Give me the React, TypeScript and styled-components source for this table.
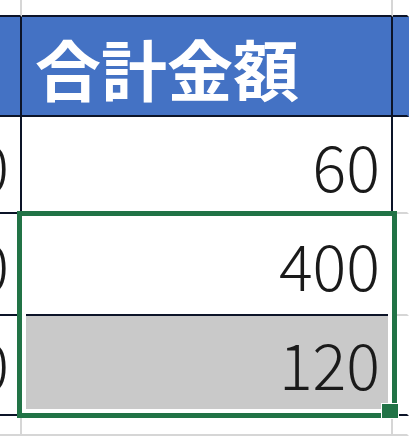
import React from "react";
import styled, { createGlobalStyle } from "styled-components";

const Global = createGlobalStyle`
  html, body { margin: 0; padding: 0; background: #ffffff; overflow: hidden; }
  body { font-family: "Noto Sans CJK JP", "Noto Sans", sans-serif; }
`;

const DARK = "#0c1428";
const LIGHT = "#d6d6d6";
const GREEN = "#217346";

const Sheet = styled.div`
  position: relative;
  width: 409px;
  height: 436px;
  overflow: hidden;
  display: grid;
  grid-template-columns: 22px 371px 1fr;
  grid-template-rows: 17px 100px 97px 102px 100px 1fr;
`;

type CellProps = {
  $head?: boolean;
  $rightLine?: string;
  $bottomLine?: string;
  $fill?: string;
  $align?: "left" | "right";
};

const Cell = styled.div<CellProps>`
  box-sizing: border-box;
  overflow: hidden;
  white-space: nowrap;
  display: flex;
  align-items: center;
  justify-content: ${(p) => (p.$align === "left" ? "flex-start" : "flex-end")};
  background: ${(p) => p.$fill ?? (p.$head ? "#4472c4" : "#ffffff")};
  border-right: 2px solid ${(p) => p.$rightLine ?? "transparent"};
  border-bottom: 2px solid ${(p) => p.$bottomLine ?? "transparent"};
  padding: ${(p) => (p.$align === "left" ? "0 0 0 13px" : "0 11px 0 0")};
`;

const HeadText = styled.span`
  font-family: "Noto Sans CJK JP", sans-serif;
  font-weight: 700;
  font-size: 66px;
  line-height: 1;
  color: #ffffff;
  margin-top: 1px;
`;

const Num = styled.span<{ $shift?: number }>`
  font-family: "Noto Sans CJK JP", "Noto Sans", sans-serif;
  font-weight: 300;
  font-size: 63px;
  line-height: 1;
  color: #1a1a1a;
  margin-top: ${(p) => p.$shift ?? 0}px;
`;

const Selection = styled.div`
  position: absolute;
  left: 17px;
  top: 211px;
  width: 380px;
  height: 207px;
  box-sizing: border-box;
  border: 5px solid ${GREEN};
  box-shadow: inset 0 0 0 4px #ffffff;
  pointer-events: none;
`;

const Handle = styled.div`
  position: absolute;
  right: -7px;
  bottom: -6px;
  width: 18px;
  height: 16px;
  box-sizing: border-box;
  background: ${GREEN};
  border: 1px solid #ffffff;
`;

const rows: { left: string; value: string; fill?: string; shift?: number }[] = [
  { left: "0", value: "60" },
  { left: "0", value: "400", shift: -2 },
  { left: "0", value: "120", fill: "#c9c9c9", shift: -6 },
];

export default function App() {
  return (
    <>
      <Global />
      <Sheet>
        <Cell $rightLine={LIGHT} $bottomLine={DARK} />
        <Cell $rightLine={LIGHT} $bottomLine={DARK} />
        <Cell $bottomLine={DARK} />

        <Cell $head $rightLine={DARK} $bottomLine={DARK} />
        <Cell $head $rightLine={DARK} $bottomLine={DARK} $align="left">
          <HeadText>合計金額</HeadText>
        </Cell>
        <Cell $head $bottomLine={DARK} $align="left">
          <HeadText>消費税</HeadText>
        </Cell>

        {rows.map((r, i) => (
          <React.Fragment key={i}>
            <Cell $rightLine={DARK} $bottomLine={DARK}>
              <Num $shift={r.shift}>{r.left}</Num>
            </Cell>
            <Cell $rightLine={DARK} $bottomLine={DARK} $fill={r.fill}>
              <Num $shift={r.shift}>{r.value}</Num>
            </Cell>
            <Cell $bottomLine={i === 2 ? DARK : LIGHT} />
          </React.Fragment>
        ))}

        <Cell $rightLine={LIGHT} $bottomLine={LIGHT} />
        <Cell $rightLine={LIGHT} $bottomLine={LIGHT} />
        <Cell $bottomLine={LIGHT} />

        <Selection>
          <Handle />
        </Selection>
      </Sheet>
    </>
  );
}
